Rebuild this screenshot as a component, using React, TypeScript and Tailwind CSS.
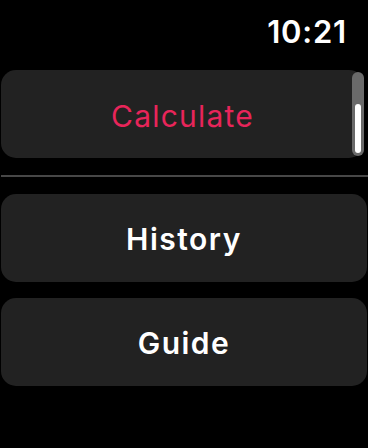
import React from 'react'

const font = {fontFamily: 'Inter, "Noto Sans", sans-serif'}

const MenuCard = ({label, className}: {label: string; className: string}) => (
  <div className="flex h-[88px] w-[366px] items-center justify-center rounded-[15px] bg-[#222222] pt-[3px]">
    <span className={className}>{label}</span>
  </div>
)

export default function App(): React.ReactElement {
  return (
    <div className="flex h-[448px] w-[368px] flex-col bg-black pl-[1px]" style={font}>
      <div className="flex h-[70px] justify-end pr-[21px] pt-[13px]">
        <span className="text-[31px] font-semibold leading-[38px] tracking-[0.8px] text-white">10:21</span>
      </div>

      <div className="relative flex h-[88px] w-[363px] items-center justify-center rounded-[15px] bg-[#222222] pt-[4px]">
        <span className="text-[30px] font-normal tracking-[1.2px] text-[#e8255a]">Calculate</span>
        <div className="absolute right-[0px] top-[2px] flex h-[84px] w-[12px] flex-col justify-end rounded-full bg-[#6a6a6a] p-[3px]">
          <div className="h-[49px] w-full rounded-full bg-white" />
        </div>
      </div>

      <div className="mt-[17px] h-[2px] w-[367px] bg-[#474747]" />

      <div className="mt-[17px] flex flex-col gap-[16px]">
        <MenuCard label="History" className="text-[30px] font-semibold tracking-[1.5px] text-white" />
        <MenuCard label="Guide" className="text-[30px] font-semibold tracking-[1.5px] text-white" />
      </div>
    </div>
  )
}
